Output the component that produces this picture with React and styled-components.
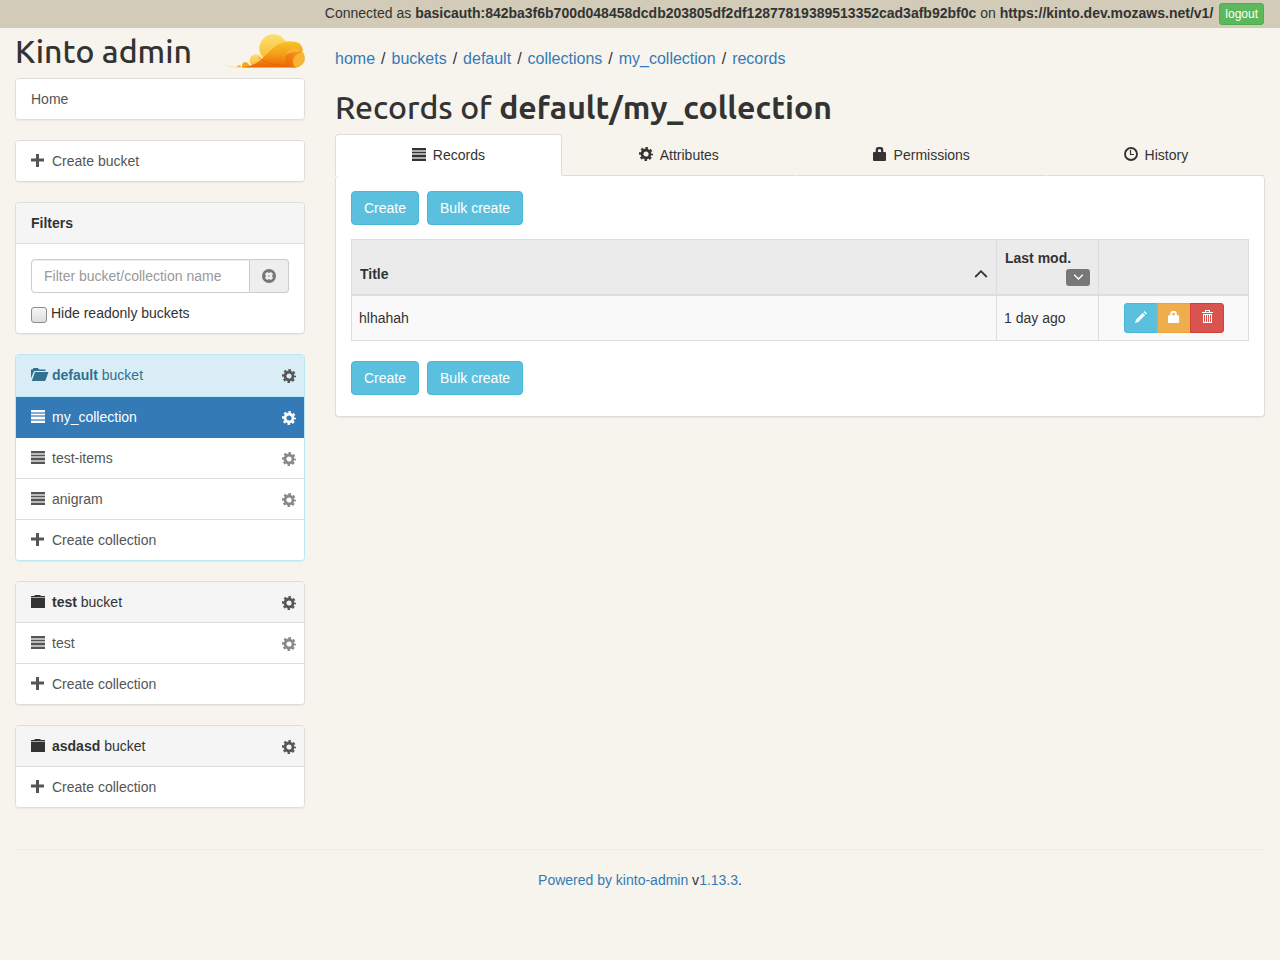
import React from "react";
import styled, { createGlobalStyle, css } from "styled-components";

const GlobalStyle = createGlobalStyle`
  *, *::before, *::after { box-sizing: border-box; }
  body {
    margin: 0;
    background: #f7f4ed;
    color: #333;
    font: 14px/20px "Liberation Sans", Arial, sans-serif;
  }
  a { color: #337ab7; text-decoration: none; }
  button, input { font: inherit; }
`;

/* ---------- icons ---------- */

const Glyph = styled.svg`
  width: ${(p) => p.$size || 14}px;
  height: ${(p) => p.$size || 14}px;
  flex: none;
  display: block;
  fill: currentColor;
  overflow: visible;
`;

const PlusIcon = () => (
  <Glyph viewBox="0 0 14 14"><path d="M5 1h3v4.500h5v3H8V14H5V8.500H0v-3h5z" /></Glyph>
);
const ListIcon = () => (
  <Glyph viewBox="0 0 14 14">
    <path d="M0 1h14v2H0zM0 5h14v1H0zM0 8h14v2H0zM0 12h14v2H0z" />
    <path opacity=".4" d="M0 3h14v2H0zM0 6h14v2H0zM0 10h14v2H0z" />
  </Glyph>
);
const GearIcon = () => (
  <Glyph viewBox="0 0 14 14">
    <g fill="none" stroke="currentColor">
      <circle cx="7" cy="7" r="4" strokeWidth="2.800" />
      <circle cx="7" cy="7" r="6" strokeWidth="2" strokeDasharray="2.500 2.212" strokeDashoffset="1.250" />
    </g>
  </Glyph>
);
const LockIcon = ({ size }) => (
  <Glyph viewBox="0 0 14 14" $size={size}>
    <path fillRule="evenodd" d="M2.700 5V3Q2.700 0 5.200 0h2.600q2.500 0 2.500 3v2H12q1 0 1 1.200V13q0 1-1 1H1q-1 0-1-1V6.200Q0 5 1 5zM5 5h3V3.200Q8 2.300 7.300 2.300H5.700Q5 2.300 5 3.200z" />
  </Glyph>
);
const ClockIcon = () => (
  <Glyph viewBox="0 0 14 14">
    <g fill="none" stroke="currentColor">
      <circle cx="7" cy="7" r="6" strokeWidth="1.900" />
      <path d="M6.500 3v4.500H10" strokeWidth="1.200" />
    </g>
  </Glyph>
);
const FolderOpenIcon = () => (
  <Glyph viewBox="0 0 14 14">
    <path d="M0 11.500V2.500h1.500l1-1.500h4.500l1 1.500h6.500V4H4Q3 4 2.600 5z" />
    <path d="M4 5h13.500L14.400 13.400Q14 14 13.300 14H.8z" />
  </Glyph>
);
const FolderIcon = () => (
  <Glyph viewBox="0 0 14 14">
    <path d="M0 4h14v10H0z" />
    <path d="M0 2h3l1-1h5l1 1h4v1H0z" />
    <path opacity=".4" d="M0 3h14v1H0z" />
  </Glyph>
);
const ClearIcon = () => (
  <Glyph viewBox="0 0 14 14">
    <path fillRule="evenodd" d="M7 0a7 7 0 1 1 0 14A7 7 0 0 1 7 0zM5 3 3 5 4 7 3 9l2 2 2-1 2 1 2-2-1-2 1-2-2-2-2 1z" />
    <path opacity=".35" d="M6 6h2v2H6z" />
  </Glyph>
);
const ChevronIcon = ({ down, size }) => (
  <Glyph viewBox="0 0 14 14" $size={size}>
    <path d={down ? "M1.500 3.500 7 9 12.500 3.500" : "M1.200 10 7 4.200 12.800 10"} fill="none" stroke="currentColor" strokeWidth="1.800" />
  </Glyph>
);
const PencilIcon = () => (
  <Glyph viewBox="0 0 12 12" $size={12}>
    <path d="M0 12l1-3.200L7.800 2l2.200 2.200L3.200 11zM8.500 1.300 9.600 0 12 2.400l-1.300 1.100z" />
  </Glyph>
);
const TrashIcon = () => (
  <Glyph viewBox="0 0 14 14">
    <path fillRule="evenodd" d="M2 2h3V0h5v2h3v1H2zM6 1v1h3V1z" />
    <path d="M3 4h9v1H3zM3 5h1v8H3zM5 5h1v8H5zM7 5h1v8H7zM9 5h1v8H9zM11 5h1v8h-1zM3 12h9v1H3z" />
  </Glyph>
);

const LogoSvg = styled.svg`
  width: 80px;
  height: 34px;
  flex: none;
`;
const Logo = () => (
  <LogoSvg viewBox="15 17 240 102" role="img" aria-label="Kinto">
    <defs>
      <linearGradient id="pale" x1="0" y1="0" x2="0" y2="1">
        <stop offset="0" stopColor="#fce06c" />
        <stop offset="1" stopColor="#f8b832" />
      </linearGradient>
      <linearGradient id="wave" x1="0" y1="0" x2="0" y2="1">
        <stop offset="0" stopColor="#fac426" />
        <stop offset=".5" stopColor="#f59d17" />
        <stop offset="1" stopColor="#ea6405" />
      </linearGradient>
      <linearGradient id="curl" x1="1" y1="0" x2="0" y2="1">
        <stop offset="0" stopColor="#f9a51f" />
        <stop offset="1" stopColor="#e96404" />
      </linearGradient>
    </defs>
    <path d="M3 105q16 9 54 11v2Q18 117 3 105z" fill="#f9dc93" />
    <path d="M52 117q-1-6 5-7 6 1 8 7z" fill="#f8b52f" />
    <path d="M66 117q-1-15 9-16 12 2 17 16z" fill="#f7a622" />
    <circle cx="160" cy="60" r="42" fill="url(#pale)" />
    <circle cx="108" cy="97" r="19" fill="url(#pale)" />
    <path d="M68 117q30-2 54-22 18-20 42-40 22-16 46-16 35 0 38 22 1 10-9 11-28 2-36 14-6 17 22 31z" fill="url(#wave)" />
    <circle cx="226" cy="89" r="29" fill="#f8b534" />
    <path d="M248 62q-3 14-16 15-13 8-13 22 0 11 6 18-22-1-28-17-4-22 12-26 10-3 20-3 13 0 19-9z" fill="url(#curl)" />
    <path d="M116 87q31 24 84 28" fill="none" stroke="#df5b04" strokeWidth="2" strokeDasharray="8 3" />
    <path d="M66 117q70-1 163 0" fill="none" stroke="#ed8110" strokeWidth="2" />
  </LogoSvg>
);

/* ---------- page frame ---------- */

const SessionBar = styled.header`
  display: flex;
  justify-content: flex-end;
  align-items: center;
  gap: 6px;
  min-height: 28px;
  padding: 3px 16px 3px 15px;
  background: #d1cbb7;
`;

const SessionInfo = styled.span`
  margin-top: -2px;
`;

const Page = styled.div`
  display: grid;
  grid-template-columns: minmax(0, 1fr) minmax(0, 3fr);
`;

const Sidebar = styled.aside`
  padding: 0 15px;
`;

const Main = styled.main`
  padding: 21px 15px 0;
`;

const Brand = styled.div`
  display: flex;
  justify-content: space-between;
  align-items: center;
  height: 50px;
  padding-bottom: 4px;
`;

const Title = styled.h1`
  margin: 0;
  font: 500 32px/40px Ubuntu, "Noto Sans", "Open Sans", sans-serif;
`;

const PageTitle = styled(Title)`
  margin: 18px 0 7px;
`;

const Footer = styled.footer`
  margin: 21px 15px;
  padding: 20px 0;
  border-top: 1px solid #eeebe4;
  text-align: center;
`;

/* ---------- buttons ---------- */

const tones = {
  info: ["#5bc0de", "#46b8da"],
  warning: ["#f0ad4e", "#eea236"],
  danger: ["#d9534f", "#d43f3a"],
  success: ["#5cb85c", "#4cae4c"],
};

const Button = styled.button`
  display: inline-flex;
  align-items: center;
  justify-content: center;
  padding: 6px 12px;
  border: 1px solid ${(p) => tones[p.$tone][1]};
  border-radius: 4px;
  background: ${(p) => tones[p.$tone][0]};
  color: #fff;
  cursor: pointer;
`;

const TinyButton = styled(Button)`
  padding: 1px 5px;
  border-radius: 3px;
  font-size: 12px;
  line-height: 18px;
`;

const ButtonRow = styled.div`
  display: flex;
  gap: 8px;
`;

const ButtonGroup = styled.div`
  display: flex;
  justify-content: center;
`;

const GroupButton = styled(Button)`
  width: 34px;
  height: 30px;
  padding: 0 0 2px;
  border-radius: 0;
  & + & { margin-left: -1px; }
  &:first-child { border-radius: 3px 0 0 3px; }
  &:last-child { border-radius: 0 3px 3px 0; }
`;

/* ---------- sidebar panels ---------- */

const Panel = styled.section`
  margin-bottom: 20px;
  border: 1px solid ${(p) => (p.$current ? "#bce8f1" : "#ddd")};
  border-radius: 4px;
  background: #fff;
  box-shadow: 0 1px 1px rgba(0, 0, 0, 0.05);
  overflow: hidden;
`;

/* Icons sit slightly above the middle of their line of text. */
const raisedIcon = css`
  > svg { margin-bottom: 2px; }
`;

const line = css`
  display: flex;
  align-items: center;
  gap: 7px;
  padding: 10px 8px 10px 15px;
`;

const PanelHeading = styled.div`
  ${line}
  ${raisedIcon}
  padding-bottom: ${(p) => (p.$current ? 11 : 10)}px;
  border-bottom: 1px solid ${(p) => (p.$current ? "#bce8f1" : "#ddd")};
  background: ${(p) => (p.$current ? "#d9edf7" : "#f5f5f5")};
  color: ${(p) => (p.$current ? "#31708f" : "#333")};
`;

const PanelName = styled.span`
  flex: 1;
`;

const Item = styled.div`
  ${line}
  background: ${(p) => (p.$active ? "#337ab7" : "#fff")};
  color: ${(p) => (p.$active ? "#fff" : "#555")};
  &:not(:last-child) { border-bottom: 1px solid ${(p) => (p.$active ? "#337ab7" : "#ddd")}; }
`;

const ItemLink = styled.a`
  display: flex;
  align-items: center;
  gap: 7px;
  flex: 1;
  color: inherit;
  ${raisedIcon}
`;

const GearLink = styled.a`
  margin-top: 2px;
  color: ${(p) => p.$color};
`;

const FilterBody = styled.form`
  padding: 15px 15px 10px;
`;

const InputGroup = styled.div`
  display: flex;
  margin-bottom: 10px;
`;

const FilterInput = styled.input`
  flex: 1;
  min-width: 0;
  height: 34px;
  padding: 6px 12px;
  border: 1px solid #ccc;
  border-radius: 4px 0 0 4px;
  background: #fff;
  box-shadow: inset 0 1px 1px rgba(0, 0, 0, 0.075);
  &::placeholder { color: #999; opacity: 1; }
`;

const ClearButton = styled.button`
  width: 39px;
  padding: 0 12px;
  border: 1px solid #ccc;
  border-left: 0;
  border-radius: 0 4px 4px 0;
  background: #eee;
  color: #777;
`;

const CheckLabel = styled.label`
  display: flex;
  align-items: center;
  gap: 4px;
`;

const CheckBox = styled.input`
  appearance: none;
  width: 16px;
  height: 16px;
  margin: 3px 0 0;
  border: 1px solid #8c8c8c;
  border-radius: 3px;
  background: linear-gradient(#f6f6f6, #dedede);
`;

/* ---------- main area ---------- */

const Breadcrumbs = styled.nav`
  display: flex;
  flex-wrap: wrap;
  gap: 6px;
  font-size: 16px;
  line-height: 20px;
`;

const Tabs = styled.nav`
  display: flex;
`;

const Tab = styled.a`
  ${raisedIcon}
  flex: 1 1 auto;
  display: flex;
  align-items: center;
  justify-content: center;
  gap: 7px;
  height: 42px;
  border: 1px solid ${(p) => (p.$active ? "#ddd" : "transparent")};
  border-bottom-color: ${(p) => (p.$active ? "#fff" : "#ddd")};
  border-radius: 4px 4px 0 0;
  background: ${(p) => (p.$active ? "#fff" : "transparent")};
  color: #333;
`;

const TabPanel = styled.section`
  padding: 15px 15px 21px;
  border: 1px solid #ddd;
  border-top: 0;
  border-radius: 4px;
  background: #fff;
  box-shadow: 0 1px 1px rgba(0, 0, 0, 0.05);
`;

const Table = styled.table`
  width: 100%;
  margin: 14px 0 20px;
  border-collapse: collapse;
  table-layout: fixed;
`;

const HeadCell = styled.th`
  width: ${(p) => p.$width || "auto"};
  padding: 8px;
  border: 1px solid #ddd;
  border-bottom-width: 2px;
  background: #ebebeb;
  text-align: left;
  vertical-align: bottom;
`;

const HeadLine = styled.div`
  display: flex;
  justify-content: space-between;
  align-items: center;
  padding-bottom: 2px;
`;

const SortButton = styled.button`
  display: flex;
  padding: 0;
  border: 0;
  background: none;
  color: #333;
`;

const SortBadge = styled.button`
  display: flex;
  align-items: center;
  justify-content: center;
  width: 24px;
  height: 17px;
  margin: 1px 0 0 auto;
  padding: 0;
  border: 0;
  border-radius: 3px;
  background: #777;
  color: #fff;
`;

const Cell = styled.td`
  padding: 7px;
  border: 1px solid #ddd;
  background: #f9f9f9;
`;

/* ---------- content ---------- */

const buckets = [
  { name: "default", current: true, collections: ["my_collection", "test-items", "anigram"] },
  { name: "test", collections: ["test"] },
  { name: "asdasd", collections: [] },
];

const crumbs = ["home", "buckets", "default", "collections", "my_collection", "records"];

const tabs = [
  ["Records", ListIcon],
  ["Attributes", GearIcon],
  ["Permissions", LockIcon],
  ["History", ClockIcon],
];

const Bucket = ({ name, current, collections }) => (
  <Panel $current={current}>
    <PanelHeading $current={current}>
      {current ? <FolderOpenIcon /> : <FolderIcon />}
      <PanelName><strong>{name}</strong> bucket</PanelName>
      <GearLink href="#attributes" aria-label={`${name} attributes`} $color="#555"><GearIcon /></GearLink>
    </PanelHeading>
    {collections.map((c) => {
      const active = c === "my_collection";
      return (
        <Item key={c} $active={active}>
          <ItemLink href={`#${c}`}><ListIcon />{c}</ItemLink>
          <GearLink href={`#${c}-attributes`} aria-label={`${c} attributes`} $color={active ? "#fff" : "#888"}><GearIcon /></GearLink>
        </Item>
      );
    })}
    <Item><ItemLink href="#create-collection"><PlusIcon />Create collection</ItemLink></Item>
  </Panel>
);

const CreateButtons = () => (
  <ButtonRow>
    <Button $tone="info">Create</Button>
    <Button $tone="info">Bulk create</Button>
  </ButtonRow>
);

export default function App() {
  return (
    <>
      <GlobalStyle />
      <SessionBar>
        <SessionInfo>
          Connected as <strong>basicauth:842ba3f6b700d048458dcdb203805df2df12877819389513352cad3afb92bf0c</strong> on{" "}
          <strong>https://kinto.dev.mozaws.net/v1/</strong>
        </SessionInfo>
        <TinyButton $tone="success">logout</TinyButton>
      </SessionBar>
      <Page>
        <Sidebar>
          <Brand><Title>Kinto admin</Title><Logo /></Brand>
          <Panel><Item><ItemLink href="#home">Home</ItemLink></Item></Panel>
          <Panel><Item><ItemLink href="#create-bucket"><PlusIcon />Create bucket</ItemLink></Item></Panel>
          <Panel>
            <PanelHeading><strong>Filters</strong></PanelHeading>
            <FilterBody>
              <InputGroup>
                <FilterInput type="text" aria-label="Filter" placeholder="Filter bucket/collection name" />
                <ClearButton type="button" aria-label="Clear filter"><ClearIcon /></ClearButton>
              </InputGroup>
              <CheckLabel><CheckBox type="checkbox" />Hide readonly buckets</CheckLabel>
            </FilterBody>
          </Panel>
          {buckets.map((b) => <Bucket key={b.name} {...b} />)}
        </Sidebar>
        <Main>
          <Breadcrumbs aria-label="Breadcrumb">
            {crumbs.map((c, i) => (
              <React.Fragment key={c}>{i > 0 && <span>/</span>}<a href={`#${c}`}>{c}</a></React.Fragment>
            ))}
          </Breadcrumbs>
          <PageTitle>Records of <b>default/my_collection</b></PageTitle>
          <Tabs>
            {tabs.map(([label, Icon], i) => (
              <Tab key={label} href={`#tab-${label}`} $active={i === 0}><Icon />{label}</Tab>
            ))}
          </Tabs>
          <TabPanel>
            <CreateButtons />
            <Table>
              <thead>
                <tr>
                  <HeadCell>
                    <HeadLine>Title<SortButton aria-label="Sort by title"><ChevronIcon /></SortButton></HeadLine>
                  </HeadCell>
                  <HeadCell $width="102px">
                    Last mod.
                    <SortBadge aria-label="Sort by last modification"><ChevronIcon down size={11} /></SortBadge>
                  </HeadCell>
                  <HeadCell $width="150px" />
                </tr>
              </thead>
              <tbody>
                <tr>
                  <Cell>hlhahah</Cell>
                  <Cell>1 day ago</Cell>
                  <Cell>
                    <ButtonGroup>
                      <GroupButton $tone="info" aria-label="Edit"><PencilIcon /></GroupButton>
                      <GroupButton $tone="warning" aria-label="Permissions"><LockIcon size={12} /></GroupButton>
                      <GroupButton $tone="danger" aria-label="Delete"><TrashIcon /></GroupButton>
                    </ButtonGroup>
                  </Cell>
                </tr>
              </tbody>
            </Table>
            <CreateButtons />
          </TabPanel>
        </Main>
      </Page>
      <Footer>
        <a href="#kinto-admin">Powered by kinto-admin</a> v<a href="#release">1.13.3</a>.
      </Footer>
    </>
  );
}
